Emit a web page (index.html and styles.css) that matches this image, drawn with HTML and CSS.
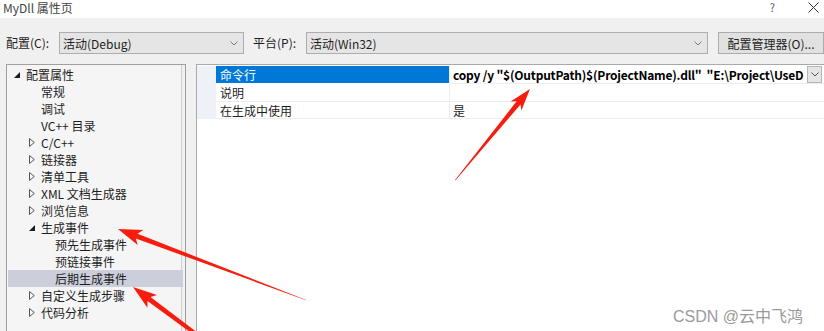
FILE: index.html
```html
<!DOCTYPE html>
<html lang="zh-CN">
<head>
<meta charset="utf-8">
<title>MyDll 属性页</title>
<link rel="stylesheet" href="styles.css">
</head>
<body>
<div class="window">
  <div class="titlebar">
    <span class="title">MyDll 属性页</span>
    <span class="tb-help">?</span>
    <svg class="tb-close" width="11" height="11" viewBox="0 0 11 11"><path d="M0.5 0.5L10.5 10.5M10.5 0.5L0.5 10.5" stroke="#333" stroke-width="1" fill="none"/></svg>
  </div>

  <div class="toolbar">
    <span class="tlabel">配置(C):</span>
    <div class="combo combo-config">
      <span>活动(Debug)</span>
      <svg class="chev" width="8" height="5" viewBox="0 0 8 5"><path d="M0.5 0.5L4 4L7.5 0.5" stroke="#777" fill="none"/></svg>
    </div>
    <span class="tlabel tlabel-platform">平台(P):</span>
    <div class="combo combo-platform">
      <span>活动(Win32)</span>
      <svg class="chev" width="8" height="5" viewBox="0 0 8 5"><path d="M0.5 0.5L4 4L7.5 0.5" stroke="#777" fill="none"/></svg>
    </div>
    <div class="btn">配置管理器(O)...</div>
  </div>

  <div class="panes">
    <div class="tree">
      <div class="node l0"><span class="exp"><i class="tri-open"></i></span>配置属性</div>
      <div class="node l2a"><span class="exp"></span>常规</div>
      <div class="node l2a"><span class="exp"></span>调试</div>
      <div class="node l2a"><span class="exp"></span>VC++ 目录</div>
      <div class="node l1"><span class="exp"><svg class="tri-closed" width="6" height="9" viewBox="0 0 6 9"><path d="M0.5 0.5L5.3 4.5L0.5 8.5Z" fill="none" stroke="#555"/></svg></span>C/C++</div>
      <div class="node l1"><span class="exp"><svg class="tri-closed" width="6" height="9" viewBox="0 0 6 9"><path d="M0.5 0.5L5.3 4.5L0.5 8.5Z" fill="none" stroke="#555"/></svg></span>链接器</div>
      <div class="node l1"><span class="exp"><svg class="tri-closed" width="6" height="9" viewBox="0 0 6 9"><path d="M0.5 0.5L5.3 4.5L0.5 8.5Z" fill="none" stroke="#555"/></svg></span>清单工具</div>
      <div class="node l1"><span class="exp"><svg class="tri-closed" width="6" height="9" viewBox="0 0 6 9"><path d="M0.5 0.5L5.3 4.5L0.5 8.5Z" fill="none" stroke="#555"/></svg></span>XML 文档生成器</div>
      <div class="node l1"><span class="exp"><svg class="tri-closed" width="6" height="9" viewBox="0 0 6 9"><path d="M0.5 0.5L5.3 4.5L0.5 8.5Z" fill="none" stroke="#555"/></svg></span>浏览信息</div>
      <div class="node l1"><span class="exp"><i class="tri-open"></i></span>生成事件</div>
      <div class="node l2"><span class="exp"></span>预先生成事件</div>
      <div class="node l2"><span class="exp"></span>预链接事件</div>
      <div class="node l2 selected"><span class="exp"></span>后期生成事件</div>
      <div class="node l1"><span class="exp"><svg class="tri-closed" width="6" height="9" viewBox="0 0 6 9"><path d="M0.5 0.5L5.3 4.5L0.5 8.5Z" fill="none" stroke="#555"/></svg></span>自定义生成步骤</div>
      <div class="node l1"><span class="exp"><svg class="tri-closed" width="6" height="9" viewBox="0 0 6 9"><path d="M0.5 0.5L5.3 4.5L0.5 8.5Z" fill="none" stroke="#555"/></svg></span>代码分析</div>
    </div>

    <div class="grid">
      <div class="prow">
        <div class="gutter"></div>
        <div class="pname active">命令行</div>
        <div class="pvalue bold"><span class="vtext">copy /y "$(OutputPath)$(ProjectName).dll"&nbsp; "E:\Project\UseD</span>
          <div class="ddbtn"><svg width="8" height="5" viewBox="0 0 8 5"><path d="M0.5 0.5L4 4L7.5 0.5" stroke="#555" fill="none"/></svg></div>
        </div>
      </div>
      <div class="prow">
        <div class="gutter"></div>
        <div class="pname">说明</div>
        <div class="pvalue"></div>
      </div>
      <div class="prow">
        <div class="gutter"></div>
        <div class="pname">在生成中使用</div>
        <div class="pvalue">是</div>
      </div>
    </div>
  </div>

  <div class="watermark">CSDN @云中飞鸿</div>

  <svg class="arrows" width="824" height="331" viewBox="0 0 824 331">
    <polygon fill="#f71d0e" points="306,300.3 305.6,299.7 137.6,233.8 143.3,230.0 118,229 137.7,245.0 135.8,238.4"/>
    <polygon fill="#f71d0e" points="239.9,364.8 150.5,297.0 157.0,294.9 133,287 147.4,307.7 147.5,301.0 238.1,367.2"/>
    <polygon fill="#f71d0e" points="455,180 455.6,180.2 520.5,104.5 521.4,110.5 530,89 510.6,101.5 516.6,101.3"/>
  </svg>
</div>
</body>
</html>
```

FILE: styles.css
```css
* { box-sizing: border-box; }

html, body {
  margin: 0;
  padding: 0;
  width: 824px;
  height: 331px;
  overflow: hidden;
  background: #f0f0f0;
}

body {
  font-family: "Noto Sans CJK SC", "Noto Sans", sans-serif;
  font-size: 12px;
  color: #1e1e1e;
}

.window {
  position: relative;
  width: 824px;
  height: 331px;
  overflow: hidden;
}

.titlebar {
  height: 18px;
  background: #ffffff;
  display: flex;
  align-items: center;
  padding-left: 3px;
  color: #444;
  font-size: 12px;
  line-height: 1;
}

.title { flex: 1; padding-bottom: 2px; }

.tb-help {
  font-size: 11px;
  color: #555;
  margin-right: 33px;
  padding-bottom: 3px;
}

.tb-close { margin-right: 5px; margin-bottom: 4px; }

.toolbar {
  display: flex;
  align-items: center;
  padding: 14px 0 0 6px;
  height: 36px;
}

.tlabel {
  width: 53px;
  flex-shrink: 0;
  line-height: 22px;
  color: #1e1e1e;
}

.tlabel-platform { width: 53px; margin-left: 9px; }

.combo {
  height: 22px;
  flex-shrink: 0;
  background: #e5e5e5;
  border: 1px solid #adadad;
  display: flex;
  align-items: center;
  padding-left: 3px;
  padding-right: 5px;
}

.combo span { flex: 1; }

.combo-config { width: 185px; }
.combo-platform { width: 402px; }

.btn {
  margin-left: 10px;
  width: 106px;
  flex-shrink: 0;
  height: 22px;
  background: #e1e1e1;
  border: 1px solid #adadad;
  display: flex;
  align-items: center;
  justify-content: center;
}

.panes {
  display: flex;
  margin-top: 10px;
  padding-left: 6px;
  height: 300px;
}

.tree {
  width: 180px;
  flex-shrink: 0;
  height: 100%;
  background: #f5f5f5;
  border: 1px solid #a0a0a0;
  box-shadow: inset -3px 0 0 #f0f0f0, inset -4px 0 0 #d0d0d0;
  padding: 1px 1px 0 1px;
}

.node {
  height: 17px;
  display: flex;
  align-items: center;
  white-space: nowrap;
  color: #1e1e1e;
}

.node.l0 { padding-left: 2px; }
.node.l1 { padding-left: 17px; }
.node.l2a { padding-left: 17px; }
.node.l2 { padding-left: 31px; }

.node.selected { background: #cccedb; margin-right: 1px; }

.exp {
  width: 16px;
  height: 17px;
  display: flex;
  align-items: center;
  flex-shrink: 0;
  padding-left: 4px;
}

.tri-open {
  display: block;
  width: 0;
  height: 0;
  border-left: 6px solid transparent;
  border-bottom: 6px solid #1e1e1e;
  margin-top: 1px;
}

.tri-closed { display: block; }

.grid {
  flex: 1;
  min-width: 0;
  margin-left: 10px;
  height: 100%;
  background: #ffffff;
  border-left: 1px solid #a9a9a9;
  border-top: 1px solid #a9a9a9;
  padding-top: 1px;
}

.prow {
  display: flex;
  height: 18px;
}

.prow:nth-child(3) { height: 17px; }

.gutter {
  width: 19px;
  flex-shrink: 0;
  background: #eef2f8;
}

.pname {
  width: 234px;
  flex-shrink: 0;
  padding-left: 4px;
  line-height: 17px;
  border-bottom: 1px solid #ededed;
  border-right: 1px solid #ededed;
  white-space: nowrap;
}

.pname.active {
  background: #0078d7;
  color: #ffffff;
  border-bottom-color: #ffffff;
}

.pvalue {
  flex: 1;
  min-width: 0;
  display: flex;
  align-items: flex-start;
  padding-left: 3px;
  line-height: 17px;
  border-bottom: 1px solid #ededed;
  overflow: hidden;
  white-space: nowrap;
  color: #1e1e1e;
}

.pvalue.bold { font-weight: bold; color: #000; }

.vtext {
  flex: 1;
  min-width: 0;
  white-space: nowrap;
  letter-spacing: -0.2px;
}

.ddbtn {
  width: 15px;
  height: 17px;
  background: #e5e5e5;
  border: 1px solid #b5b5b5;
  display: flex;
  align-items: center;
  justify-content: center;
  flex-shrink: 0;
  margin-right: 2px;
}

.watermark {
  position: absolute;
  left: 673px;
  top: 303px;
  font-family: "Liberation Sans", "Noto Sans CJK SC", sans-serif;
  font-size: 16px;
  color: #9a9a9a;
  text-shadow: 0 0 1px #ffffff;
  white-space: nowrap;
}

.arrows {
  position: absolute;
  left: 0;
  top: 0;
  pointer-events: none;
}
```
